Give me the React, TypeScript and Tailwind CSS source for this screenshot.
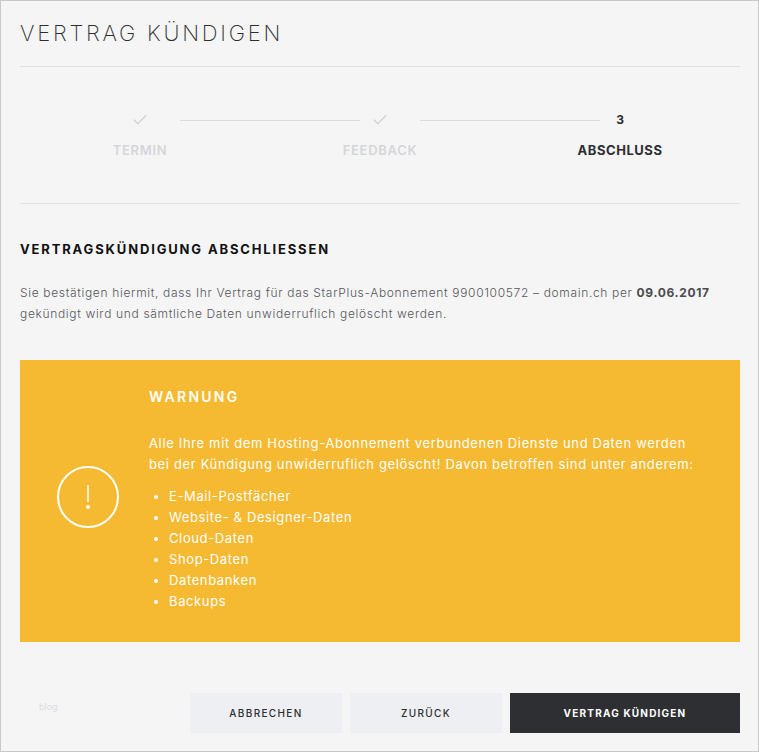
import { Check } from "lucide-react";

const items = ["E-Mail-Postfächer", "Website- & Designer-Daten", "Cloud-Daten", "Shop-Daten", "Datenbanken", "Backups"];

function Step({ label, num, done }: { label: string; num?: string; done?: boolean }) {
	return (
		<div className="flex w-[120px] flex-col items-center">
			<div className="flex h-6 items-center justify-center">
				{done ? (
					<Check className="h-[18px] w-[18px] text-[#cfd0d3]" strokeWidth={1.5} />
				) : (
					<span className="text-[12px] font-bold text-[#2d2e31]">{num}</span>
				)}
			</div>
			<div className={`mt-[6px] text-[13px] leading-6 ${done ? "font-semibold tracking-[0.7px] text-[#d5d6d9]" : "font-bold tracking-[0.55px] text-[#2d2e31]"}`}>
				{label}
			</div>
		</div>
	);
}

export default function App() {
	return (
		<div className="h-[752px] w-[759px] overflow-hidden border border-[#c9c9c9] bg-[#f5f5f6] pl-[19px] pr-[18px] font-['Inter',sans-serif]">
			<h1 className="flex h-[66px] items-center border-b border-[#dfdfe1] text-[22px] font-extralight tracking-[2.75px] text-[#2d2e31]">
				VERTRAG KÜNDIGEN
			</h1>

			{/* Steps */}
			<div className="flex h-[137px] justify-center border-b border-[#e3e3e5] pt-[41px]">
				<Step label="TERMIN" done />
				<div className="ml-[-20px] mr-[-40px] mt-[12px] h-px w-[180px] bg-[#dcdcdf]" />
				<Step label="FEEDBACK" done />
				<div className="ml-[-20px] mr-[-40px] mt-[12px] h-px w-[180px] bg-[#dcdcdf]" />
				<Step label="ABSCHLUSS" num="3" />
			</div>

			<h2 className="mt-[36px] text-[13px] font-bold leading-[18px] tracking-[1.85px] text-[#111]">
				VERTRAGSKÜNDIGUNG ABSCHLIESSEN
			</h2>
			<p className="mt-[24px] text-[12px] font-light leading-[21px] tracking-[0.66px] text-[#55565a]">
				Sie bestätigen hiermit, dass Ihr Vertrag für das StarPlus-Abonnement 9900100572 – domain.ch per <b className="font-bold text-[#4a4b4e]">09.06.2017</b>
				<br />
				gekündigt wird und sämtliche Daten unwiderruflich gelöscht werden.
			</p>

			{/* Warning */}
			<div className="mt-[36px] flex h-[282px] bg-[#f5b932] text-white">
				<div className="flex w-[129px] shrink-0 items-center justify-center pb-[8px] pl-[7px]">
					<svg width="62" height="62" viewBox="0 0 62 62" fill="none" stroke="#fff" strokeWidth="2">
						<circle cx="31" cy="31" r="30" />
						<path d="M31 19v17" strokeWidth="1.5" />
						<circle cx="31" cy="41" r="2" fill="#fff" stroke="none" />
					</svg>
				</div>
				<div className="pt-[27px]">
					<h3 className="text-[14px] font-semibold leading-[20px] tracking-[2.25px]">WARNUNG</h3>
					<p className="mt-[26px] text-[13px] leading-[21px] tracking-[0.65px]">
						Alle Ihre mit dem Hosting-Abonnement verbundenen Dienste und Daten werden
						<br />
						bei der Kündigung unwiderruflich gelöscht! Davon betroffen sind unter anderem:
					</p>
					<ul className="mt-[11px] list-disc pl-[20px] text-[13px] leading-[21px] tracking-[0.62px]">
						{items.map((item) => (
							<li key={item}>{item}</li>
						))}
					</ul>
				</div>
			</div>

			{/* Footer */}
			<div className="mt-[51px] flex items-start gap-2">
				<span className="ml-[19px] mt-[8px] text-[9px] leading-3 text-[#dcdcdf]">blog</span>
				<div className="ml-auto flex gap-2">
					<button className="h-[40px] w-[152px] bg-[#eeeff2] text-[10px] font-medium tracking-[1.35px] text-[#2d2e31]">ABBRECHEN</button>
					<button className="h-[40px] w-[152px] bg-[#eeeff2] text-[10px] font-medium tracking-[1.35px] text-[#2d2e31]">ZURÜCK</button>
					<button className="h-[40px] w-[230px] bg-[#2e2f32] text-[10px] font-bold tracking-[1.2px] text-white">VERTRAG KÜNDIGEN</button>
				</div>
			</div>
		</div>
	);
}
